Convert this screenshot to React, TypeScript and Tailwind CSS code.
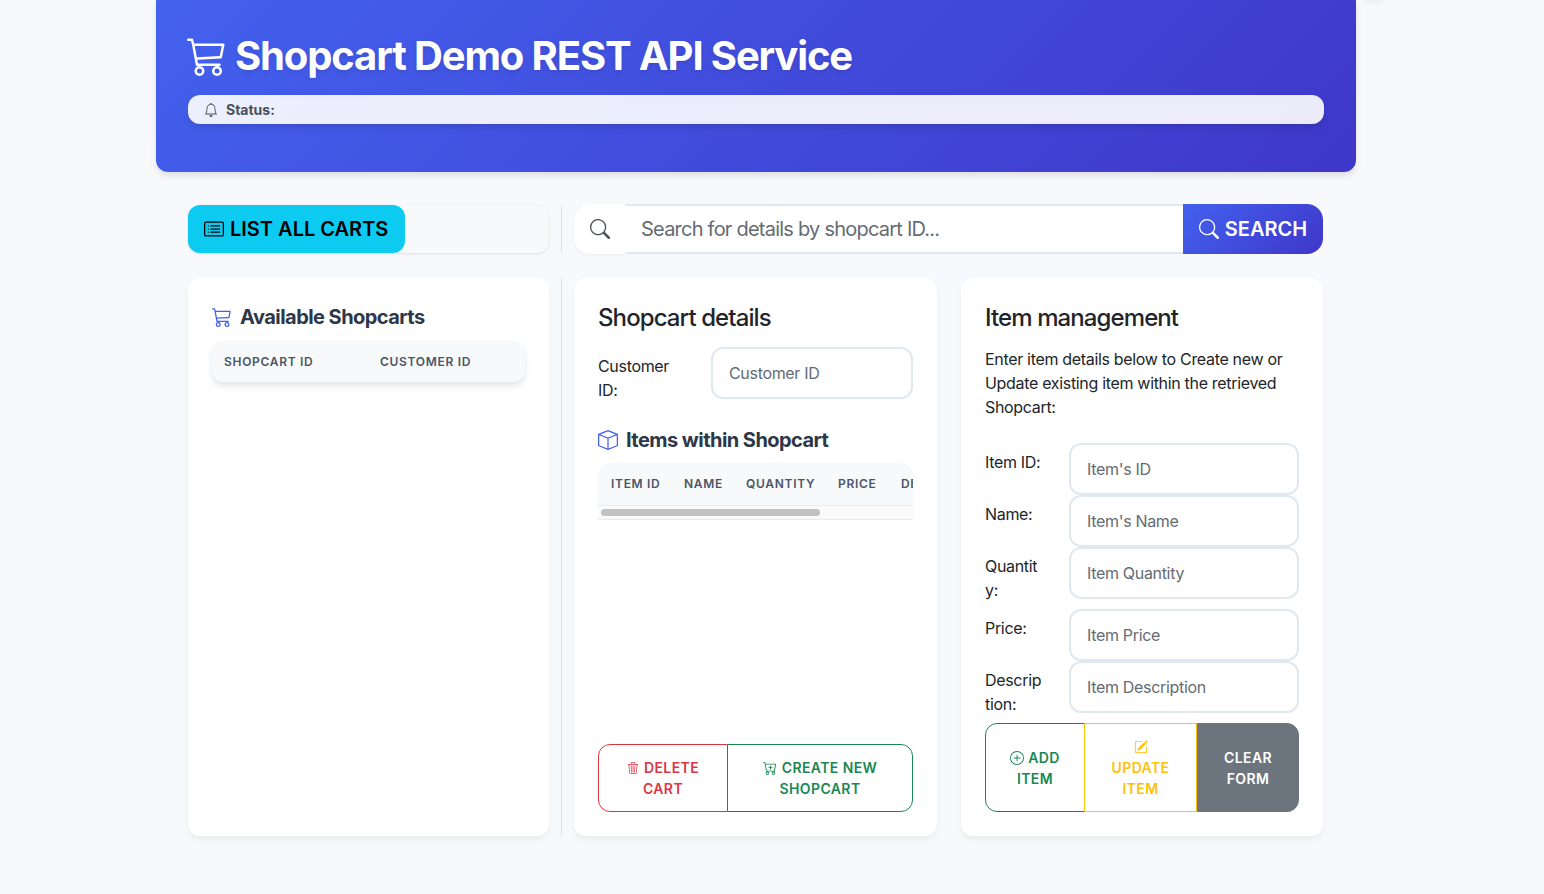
import { BsBell, BsBox, BsCart3, BsCardList, BsCartPlus, BsPencilSquare, BsPlusCircle, BsSearch, BsTrash3 } from 'react-icons/bs';

const itemFields = [
  { label: "Item ID:", placeholder: "Item's ID" },
  { label: "Name:", placeholder: "Item's Name" },
  { label: "Quantity:", placeholder: "Item Quantity" },
  { label: "Price:", placeholder: "Item Price" },
  { label: "Description:", placeholder: "Item Description" },
];

const btnBase = "text-sm font-semibold uppercase tracking-[0.4px] leading-[21px] py-3 px-4 border text-center bg-white";
const inputCls = "w-full h-[52px] rounded-xl border-2 border-[#e2e8f0] bg-white px-4 text-base tracking-[-0.32px] text-[#212529] placeholder:text-[#646b73] outline-none";
const sectionTitle = "flex items-center gap-2 text-xl leading-6 font-bold tracking-[-0.55px] text-[#2d3748]";
const tableHead = "flex items-center text-xs font-semibold uppercase tracking-[0.7px] text-[#4a5568] whitespace-nowrap";

export default function App() {
  return (
    <div className="min-h-[894px] bg-[#f8f9fc] font-['Inter',sans-serif] text-[#212529] relative overflow-hidden">
      {/* bit of something scrolled off the top */}
      <div className="absolute right-[154px] -top-[30px] w-[32px] h-[30px] rounded-full shadow-[0_2px_6px_rgba(0,0,0,0.08)]" />

      <div className="ml-[156px] w-[1200px]">
        {/* Header */}
        <div className="h-[172px] rounded-b-xl bg-[linear-gradient(135deg,#4361ee,#3f37c9)] shadow-[0_4px_6px_rgba(0,0,0,0.1)] px-8 pt-[32px]">
          <h1 className="flex items-center gap-2 -ml-px text-white text-[40px] leading-[48px] font-bold tracking-[-1.13px] [text-shadow:0_2px_4px_rgba(0,0,0,0.1)]">
            <BsCart3 size={40} />
            Shopcart Demo REST API Service
          </h1>
          <div className="mt-[15px] h-[29px] rounded-xl bg-white/90 shadow-[0_4px_6px_rgba(0,0,0,0.1)] flex items-center gap-2 px-4 text-sm font-bold text-[#495057]">
            <BsBell size={14} />
            Status:
          </div>
        </div>

        {/* Toolbar */}
        <div className="flex mt-8 px-8">
          <div className="w-[361px] shrink-0 my-px h-[48px] rounded-xl bg-[#f8f9fa] shadow-[0_1px_3px_rgba(0,0,0,0.1)]">
            <button className="h-[48px] w-[217px] rounded-xl bg-[#0dcaf0] flex items-center gap-[6px] pl-4 text-black text-xl font-semibold">
              <BsCardList size={20} />
              LIST ALL CARTS
            </button>
          </div>
          <div className="w-px my-px ml-3 bg-[#dee2e6]" />
          <div className="flex ml-3 w-[749px] h-[50px]">
            <div className="w-[51px] rounded-l-2xl bg-white flex items-center justify-center text-[#495057] shadow-[0_1px_3px_rgba(0,0,0,0.05)]">
              <BsSearch size={20} />
            </div>
            <input
              className="flex-1 min-w-0 border-y-2 border-[#e2e8f0] bg-white px-4 text-xl tracking-[-0.77px] text-[#212529] placeholder:text-[#646b73] outline-none"
              placeholder="Search for details by shopcart ID..."
            />
            <button className="w-[140px] rounded-r-2xl bg-[linear-gradient(135deg,#4361ee,#3f37c9)] flex items-center justify-center gap-[6px] text-white text-xl font-semibold">
              <BsSearch size={20} />
              SEARCH
            </button>
          </div>
        </div>

        {/* Columns */}
        <div className="flex mt-6 px-8 h-[558px]">
          {/* Available carts */}
          <div className="w-[361px] shrink-0 rounded-xl bg-white shadow-[0_4px_6px_rgba(0,0,0,0.05)] p-6">
            <h5 className={`${sectionTitle} mt-[3px]`}>
              <BsCart3 size={20} className="text-[#4361ee]" />
              Available Shopcarts
            </h5>
            <div className={`${tableHead} mt-[12px] h-[41px] w-[313px] rounded-xl bg-[#f8f9fa] shadow-[0_4px_6px_rgba(0,0,0,0.1)]`}>
              <span className="ml-3 w-[156px] shrink-0">Shopcart ID</span>
              <span>Customer ID</span>
            </div>
          </div>

          <div className="w-px ml-3 bg-[#dee2e6]" />

          {/* Shopcart details */}
          <div className="ml-3 w-[363px] rounded-xl bg-white shadow-[0_4px_6px_rgba(0,0,0,0.05)] p-6 flex flex-col">
            <h4 className="text-2xl leading-[29px] font-medium tracking-[-0.9px] mt-px">Shopcart details</h4>
            <div className="flex mt-[15px]">
              <label className="w-[113px] shrink-0 pt-[7px] pr-6 leading-6 tracking-[-0.32px]">Customer ID:</label>
              <input className={inputCls} placeholder="Customer ID" />
            </div>
            <h5 className={`${sectionTitle} mt-[26px]`}>
              <BsBox size={20} className="text-[#4361ee]" />
              Items within Shopcart
            </h5>
            <div className="mt-[11px] overflow-hidden">
              <div className={`${tableHead} h-[42px] rounded-t-xl bg-[#f8f9fa] pl-[13px]`}>
                <span className="w-[73px] shrink-0">Item ID</span>
                <span className="w-[62px] shrink-0">Name</span>
                <span className="w-[92px] shrink-0">Quantity</span>
                <span className="w-[63px] shrink-0">Price</span>
                <span className="shrink-0">Description</span>
              </div>
              <div className="h-[15px] border-y border-[#e9ecef] bg-[#fafafa] flex items-center pl-[3px]">
                <div className="h-[7px] w-[219px] rounded-full bg-[#c1c1c1]" />
              </div>
            </div>
            <div className="mt-auto flex">
              <button className={`${btnBase} w-[130px] rounded-l-xl border-[#dc3545] text-[#dc3545]`}>
                <BsTrash3 size={12} className="inline mr-[5px] align-[-1px]" />
                Delete Cart
              </button>
              <button className={`${btnBase} flex-1 -ml-px rounded-r-xl border-[#198754] text-[#198754]`}>
                <BsCartPlus size={14} className="inline mr-[5px] align-[-2px]" />
                Create New Shopcart
              </button>
            </div>
          </div>

          {/* Item management */}
          <div className="ml-6 w-[362px] rounded-xl bg-white shadow-[0_4px_6px_rgba(0,0,0,0.05)] p-6 flex flex-col">
            <h4 className="text-2xl leading-[29px] font-medium tracking-[-0.9px] mt-px">Item management</h4>
            <p className="mt-[15px] leading-6 tracking-[-0.32px]">
              Enter item details below to Create new or Update existing item within the retrieved Shopcart:
            </p>
            <div className="mt-[24px]">
              {itemFields.map((f) => (
                <div key={f.label} className="flex">
                  <label className="w-[84px] shrink-0 pt-[7px] pb-[7px] pr-6 leading-6 tracking-[-0.32px] break-all">{f.label}</label>
                  <input className={inputCls} placeholder={f.placeholder} />
                </div>
              ))}
            </div>
            <div className="flex">
              <button className={`${btnBase} w-[100px] rounded-l-xl border-[#198754] text-[#198754]`}>
                <BsPlusCircle size={14} className="inline mr-1 align-[-2px]" />
                Add Item
              </button>
              <button className={`${btnBase} w-[113px] -ml-px border-[#ffc107] text-[#ffc107]`}>
                <BsPencilSquare size={14} className="inline mb-[3px]" />
                <br />
                Update Item
              </button>
              <button className={`${btnBase} w-[102px] rounded-r-xl border-[#6c757d] !bg-[#6c757d] text-white`}>
                Clear Form
              </button>
            </div>
          </div>
        </div>
      </div>
    </div>
  );
}
